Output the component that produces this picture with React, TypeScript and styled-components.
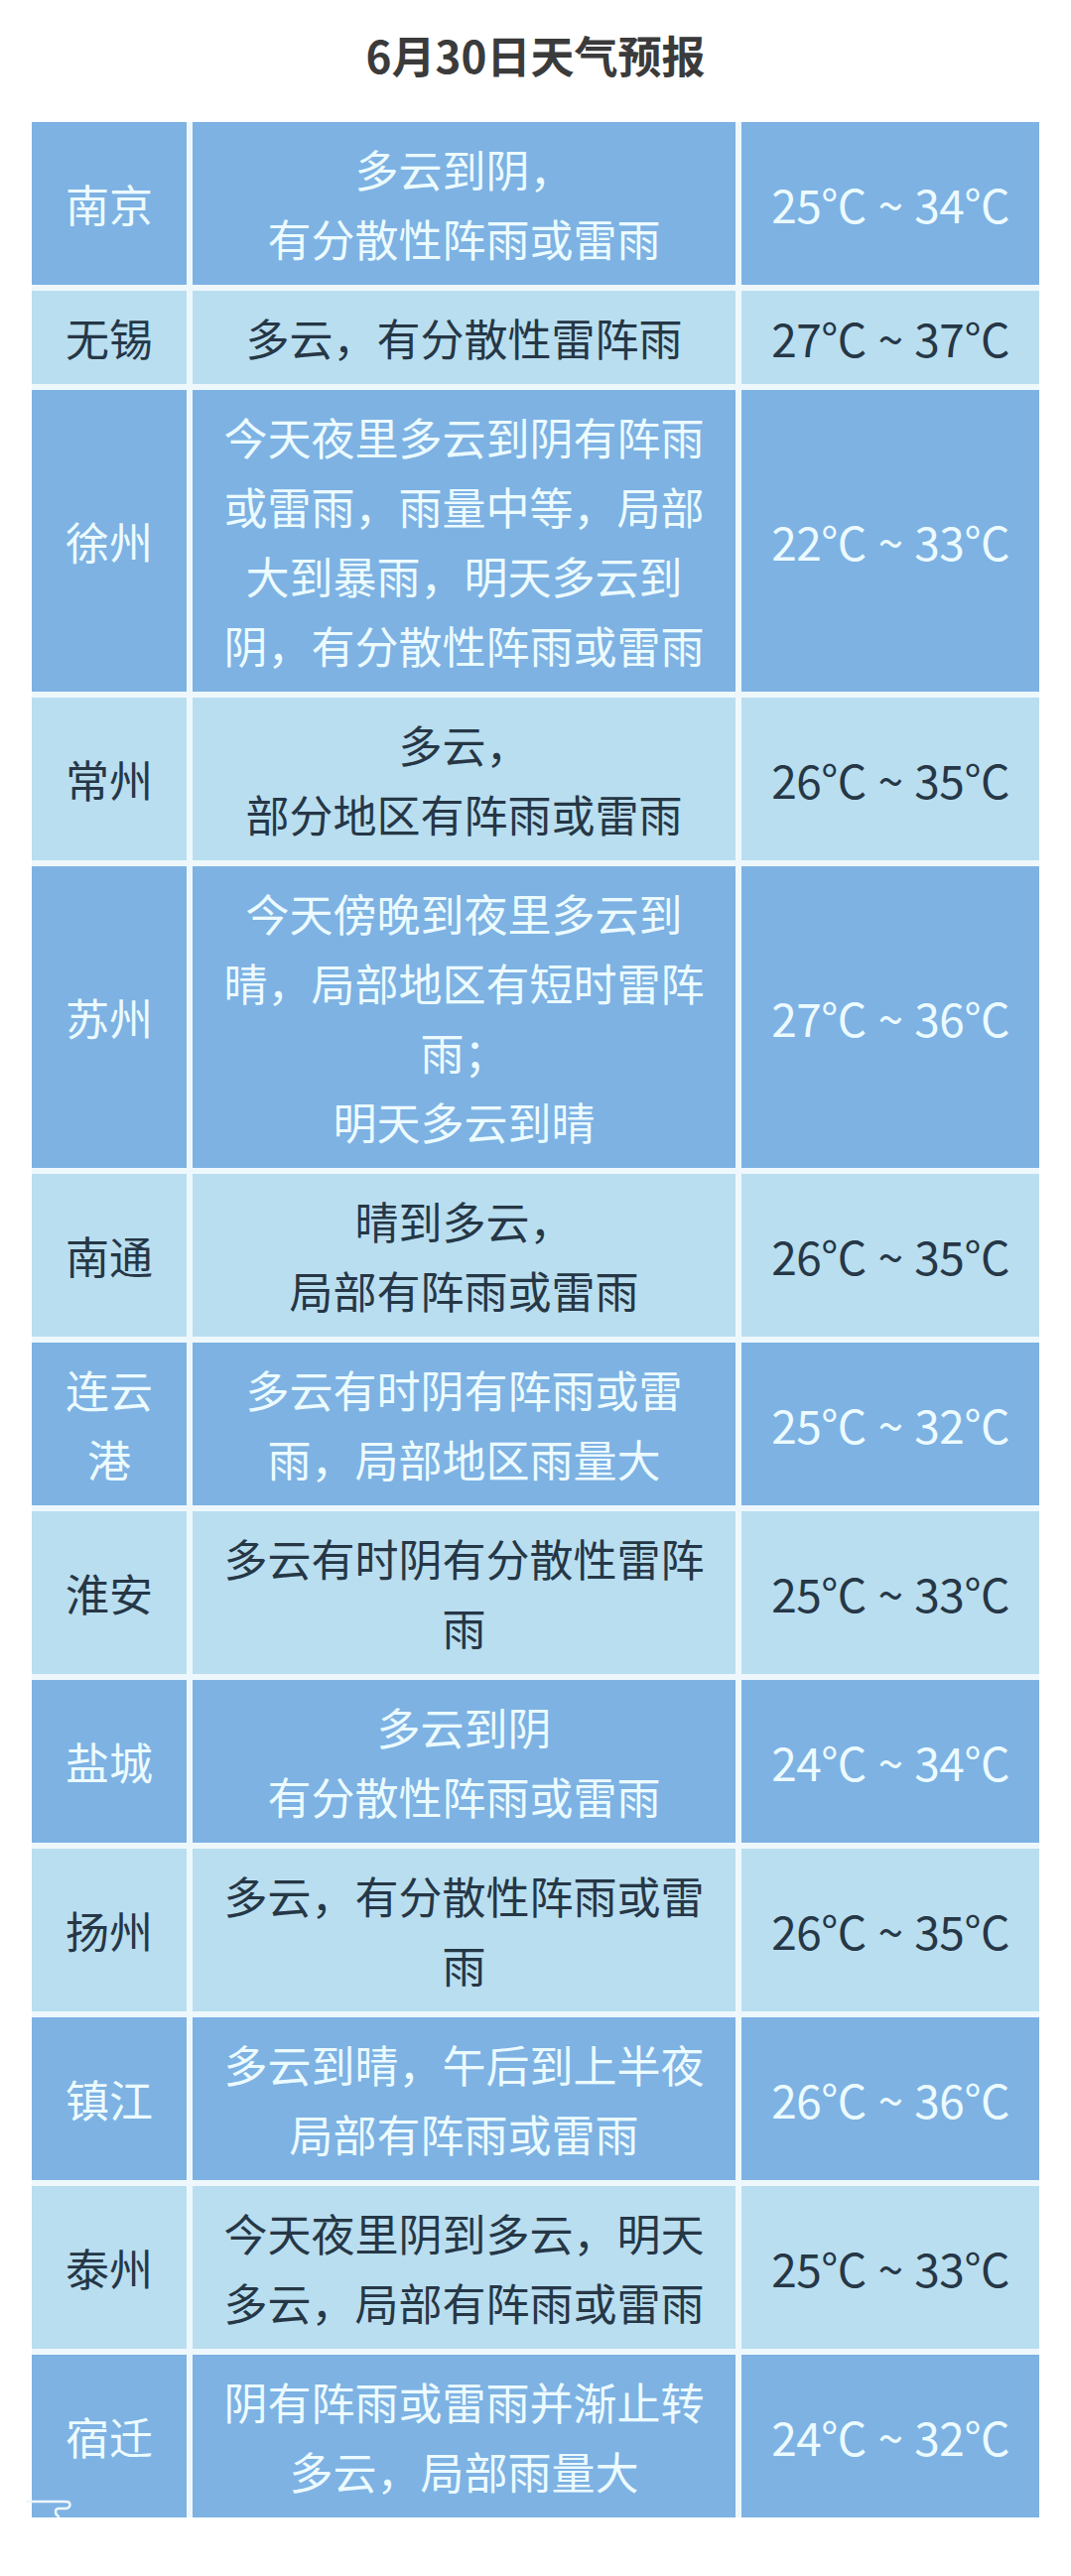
import styled, { createGlobalStyle } from "styled-components";

const GlobalStyle = createGlobalStyle`
  body {
    margin: 0;
    background: #ffffff;
    font-family: "Noto Sans CJK SC", "Noto Sans", sans-serif;
  }
`;

const Page = styled.div`
  width: 1079px;
  padding: 25px 32px 56px;
  box-sizing: border-box;
`;

const Title = styled.h1`
  margin: 0 0 38px;
  height: 60px;
  line-height: 60px;
  text-align: center;
  font-size: 44px;
  font-weight: 700;
  color: #3b3b3b;
`;

const TableWrap = styled.div`
  position: relative;
`;

const Table = styled.div`
  display: grid;
  grid-template-columns: 156px 547px 300px;
  gap: 6px;
  background: #eef8fc;
`;

const Cell = styled.div<{ $dark: boolean }>`
  display: flex;
  flex-direction: column;
  align-items: center;
  justify-content: center;
  padding: 12px 0;
  background: ${(p) => (p.$dark ? "#7db2e3" : "#b9def0")};
  color: ${(p) => (p.$dark ? "#ecfbff" : "#263746")};
  font-size: 44px;
  line-height: 70px;
  text-align: center;
  white-space: nowrap;
`;

const Temp = styled.span`
  font-size: 46px;
  word-spacing: 2px;
  letter-spacing: -0.5px;
`;

const Curl = styled.svg`
  position: absolute;
  left: -6px;
  bottom: -2px;
`;

interface Forecast {
  city: string[];
  desc: string[];
  temp: string;
}

const data: Forecast[] = [
  { city: ["南京"], desc: ["多云到阴，", "有分散性阵雨或雷雨"], temp: "25°C ~ 34°C" },
  { city: ["无锡"], desc: ["多云，有分散性雷阵雨"], temp: "27°C ~ 37°C" },
  {
    city: ["徐州"],
    desc: ["今天夜里多云到阴有阵雨", "或雷雨，雨量中等，局部", "大到暴雨，明天多云到", "阴，有分散性阵雨或雷雨"],
    temp: "22°C ~ 33°C",
  },
  { city: ["常州"], desc: ["多云，", "部分地区有阵雨或雷雨"], temp: "26°C ~ 35°C" },
  {
    city: ["苏州"],
    desc: ["今天傍晚到夜里多云到", "晴，局部地区有短时雷阵", "雨；", "明天多云到晴"],
    temp: "27°C ~ 36°C",
  },
  { city: ["南通"], desc: ["晴到多云，", "局部有阵雨或雷雨"], temp: "26°C ~ 35°C" },
  { city: ["连云", "港"], desc: ["多云有时阴有阵雨或雷", "雨，局部地区雨量大"], temp: "25°C ~ 32°C" },
  { city: ["淮安"], desc: ["多云有时阴有分散性雷阵", "雨"], temp: "25°C ~ 33°C" },
  { city: ["盐城"], desc: ["多云到阴", "有分散性阵雨或雷雨"], temp: "24°C ~ 34°C" },
  { city: ["扬州"], desc: ["多云，有分散性阵雨或雷", "雨"], temp: "26°C ~ 35°C" },
  { city: ["镇江"], desc: ["多云到晴，午后到上半夜", "局部有阵雨或雷雨"], temp: "26°C ~ 36°C" },
  { city: ["泰州"], desc: ["今天夜里阴到多云，明天", "多云，局部有阵雨或雷雨"], temp: "25°C ~ 33°C" },
  { city: ["宿迁"], desc: ["阴有阵雨或雷雨并渐止转", "多云，局部雨量大"], temp: "24°C ~ 32°C" },
];

export default function App() {
  return (
    <Page>
      <GlobalStyle />
      <Title>6月30日天气预报</Title>
      <TableWrap>
        <Table>
          {data.map((row, i) => {
            const dark = i % 2 === 0;
            return [
              <Cell key={`c${i}`} $dark={dark}>
                {row.city.map((l) => (
                  <span key={l}>{l}</span>
                ))}
              </Cell>,
              <Cell key={`d${i}`} $dark={dark}>
                {row.desc.map((l) => (
                  <span key={l}>{l}</span>
                ))}
              </Cell>,
              <Cell key={`t${i}`} $dark={dark}>
                <Temp>{row.temp}</Temp>
              </Cell>,
            ];
          })}
        </Table>
        <Curl width="50" height="22" viewBox="0 0 50 22">
          <path
            d="M1 4 H40 C46 4 46 10 40 11 H33 C29 11 29 17 33 19"
            fill="none"
            stroke="#eef6fb"
            strokeWidth="2.5"
            strokeLinecap="round"
          />
        </Curl>
      </TableWrap>
    </Page>
  );
}
